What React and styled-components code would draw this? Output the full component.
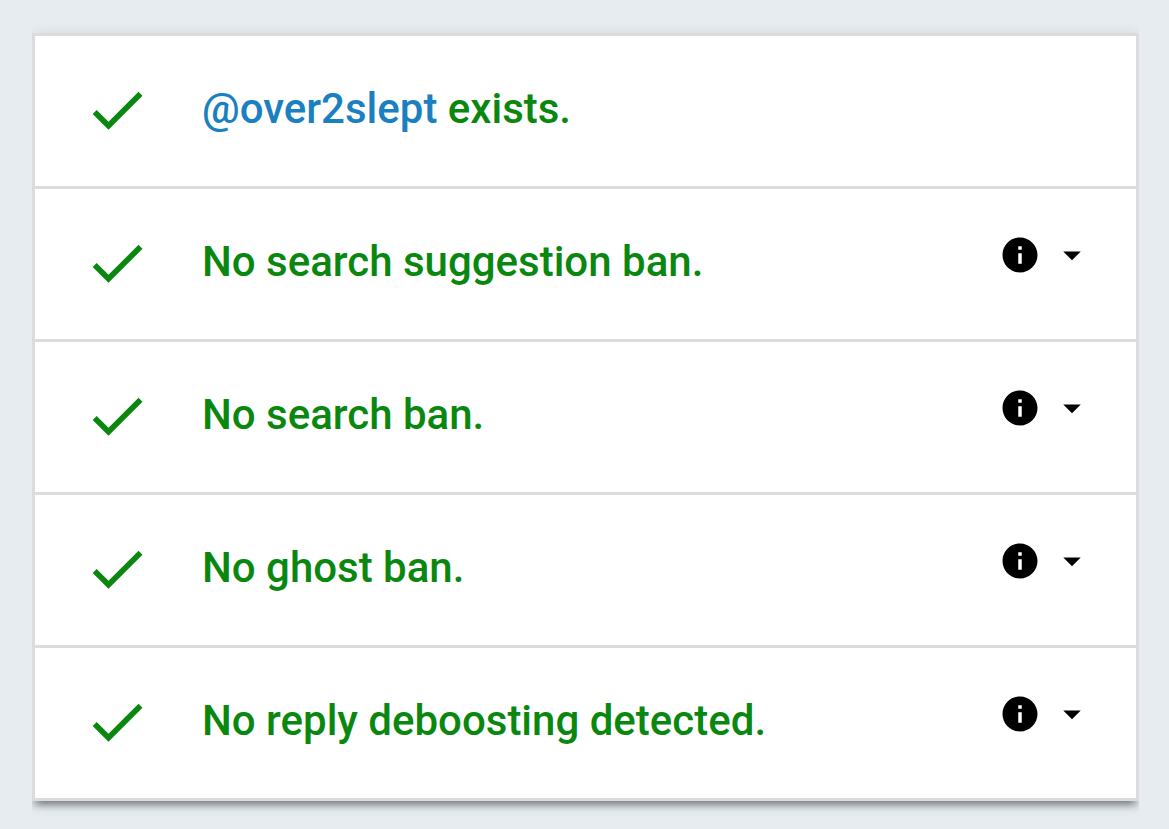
import React from "react";
import styled, { createGlobalStyle } from "styled-components";
import { MdCheck, MdInfo, MdArrowDropDown } from "react-icons/md";

const GlobalStyle = createGlobalStyle`
	* {
		box-sizing: border-box;
	}
	body {
		margin: 0;
		background-color: #e6ecf0;
		font-family: Roboto, sans-serif;
	}
`;

const Container = styled.main`
	padding: 33px 30px 28px 32px;
`;

/* the shadow only shows above and below the list */
const List = styled.ul`
	margin: 0;
	padding: 0;
	list-style: none;
	background-color: #fff;
	border: 3px solid #dcdcde;
	box-shadow: 0 6px 6px 0 rgba(0, 0, 0, 0.14),
		0 9px 6px -6px rgba(0, 0, 0, 0.3), 0 3px 15px 0 rgba(0, 0, 0, 0.12);
	clip-path: inset(-28px 0);
`;

const Item = styled.li`
	display: flex;
	align-items: center;
	height: ${(props) => (props.$last ? "150px" : "153px")};
	padding: 0 43px 2px 48px;
	border-bottom: ${(props) => (props.$last ? "none" : "3px solid #dcdcde")};
`;

const Check = styled(MdCheck)`
	flex: none;
	width: 68px;
	height: 68px;
	margin-right: 51px;
	color: #0a870f;
`;

const Title = styled.h2`
	flex: 1;
	margin: 0;
	padding-bottom: 2px;
	font-size: 42px;
	font-weight: 500;
	line-height: 60px;
	color: #0a870f;
`;

const Handle = styled.a`
	color: #1b80c0;
	text-decoration: none;
`;

const Toggle = styled.button`
	display: flex;
	align-items: center;
	gap: 10px;
	margin-bottom: 16px;
	padding: 0;
	border: none;
	background: none;
	color: #000;
	cursor: pointer;
`;

const Info = styled(MdInfo)`
	width: 42px;
	height: 42px;
`;

const Arrow = styled(MdArrowDropDown)`
	width: 42px;
	height: 42px;
`;

const results = [
	"No search suggestion ban.",
	"No search ban.",
	"No ghost ban.",
	"No reply deboosting detected.",
];

const App = () => {
	return (
		<Container>
			<GlobalStyle />
			<List>
				<Item>
					<Check />
					<Title>
						<Handle href="#over2slept">@over2slept</Handle> exists.
					</Title>
				</Item>
				{results.map((text, i) => (
					<Item key={text} $last={i === results.length - 1}>
						<Check />
						<Title>{text}</Title>
						<Toggle type="button" aria-label={`Details: ${text}`}>
							<Info />
							<Arrow />
						</Toggle>
					</Item>
				))}
			</List>
		</Container>
	);
};

export default App;
